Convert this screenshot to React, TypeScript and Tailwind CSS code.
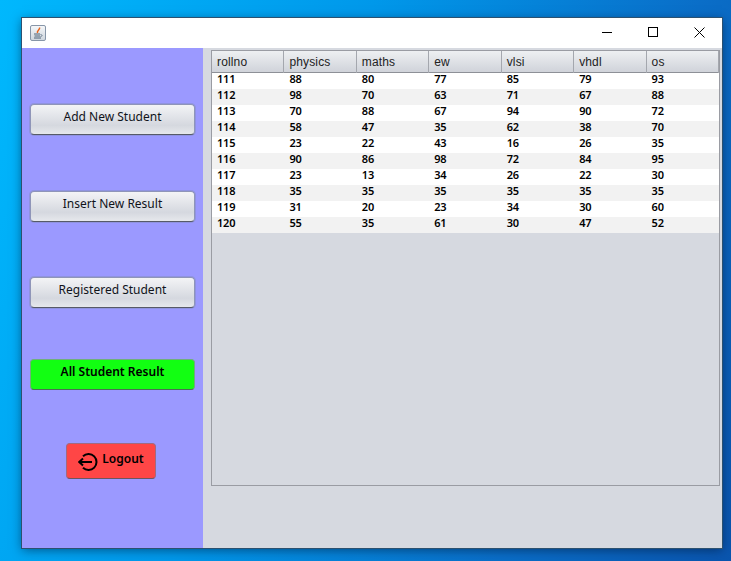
import { useState } from "react";

const COLUMNS = ["rollno", "physics", "maths", "ew", "vlsi", "vhdl", "os"];

const ROWS = [
  [111, 88, 80, 77, 85, 79, 93],
  [112, 98, 70, 63, 71, 67, 88],
  [113, 70, 88, 67, 94, 90, 72],
  [114, 58, 47, 35, 62, 38, 70],
  [115, 23, 22, 43, 16, 26, 35],
  [116, 90, 86, 98, 72, 84, 95],
  [117, 23, 13, 34, 26, 22, 30],
  [118, 35, 35, 35, 35, 35, 35],
  [119, 31, 20, 23, 34, 30, 60],
  [120, 55, 35, 61, 30, 47, 52],
];

const MENU_BUTTON =
  "flex h-[31px] w-[165px] items-center justify-center rounded-[4px] border border-[#8f95b8] border-b-[#565a68] bg-gradient-to-b from-[#f3f4f6] via-[#d5d8df] via-70% to-[#e6e8ec] pb-[5px] font-['Noto_Sans',sans-serif] text-[12px] text-[#10131a] shadow-[0_0_0_1px_#8f93e0]";

function JavaIcon() {
  return (
    <div className="flex h-4 w-4 items-center justify-center rounded-[2px] border border-[#8796a8] bg-gradient-to-b from-[#f5f7f9] to-[#cfd6de]">
      <svg width="12" height="13" viewBox="0 0 12 13" fill="none">
        <path d="M7.5 0.5C8.5 2.5 4.5 3.5 5.5 6" stroke="#e8641c" strokeWidth="1.5" />
        <path d="M2 7H8M2.5 9H8M2 11H9" stroke="#4f6478" strokeWidth="1" />
        <path d="M8.5 7.5C10.5 7.5 10.5 9.5 8.5 9.5" stroke="#4f6478" strokeWidth="0.8" />
      </svg>
    </div>
  );
}

function TitleBar() {
  return (
    <div className="flex h-[30px] items-center justify-between bg-white pl-2">
      <JavaIcon />
      <div className="flex items-center pb-0.5">
        <div className="flex h-7 w-[46px] items-center justify-center">
          <svg width="10" height="10" viewBox="0 0 10 10">
            <path d="M0 5.5H10" stroke="#000" strokeWidth="1" />
          </svg>
        </div>
        <div className="flex h-7 w-[46px] items-center justify-center">
          <svg width="10" height="10" viewBox="0 0 10 10">
            <rect x="0.5" y="0.5" width="9" height="9" fill="none" stroke="#000" strokeWidth="1" />
          </svg>
        </div>
        <div className="flex h-7 w-[46px] items-center justify-center">
          <svg width="11" height="11" viewBox="0 0 11 11">
            <path d="M0.5 0.5L10.5 10.5M10.5 0.5L0.5 10.5" stroke="#000" strokeWidth="1" />
          </svg>
        </div>
      </div>
    </div>
  );
}

function Sidebar() {
  const [active] = useState("All Student Result");

  return (
    <aside className="flex w-[181px] shrink-0 flex-col items-start bg-[#9b99ff] pl-2 pt-14">
      <button className={MENU_BUTTON}>Add New Student</button>
      <button className={`${MENU_BUTTON} mt-14`}>Insert New Result</button>
      <button className={`${MENU_BUTTON} mt-[55px]`}>Registered Student</button>
      <button className="mt-[51px] flex h-[31px] w-[165px] items-center justify-center rounded-[4px] border border-[#6fae7a] border-b-[#4d6d55] bg-[#12ff12] pb-[5px] font-['Noto_Sans',sans-serif] text-[12px] font-semibold text-black">
        {active}
      </button>
      <button className="ml-9 mt-[53px] flex h-9 w-[90px] items-center justify-center gap-[3px] rounded-[4px] border border-[#a26a80] border-b-[#6d5560] bg-[#ff4646] pb-1 font-['Noto_Sans',sans-serif] text-[12px] font-semibold text-black">
        <svg width="21" height="18" viewBox="0 0 21 18" fill="none" className="mt-1.5">
          <path d="M5 3.2A8 8 0 1 1 5 14.8" stroke="#000" strokeWidth="2" />
          <path d="M1.5 9H14" stroke="#000" strokeWidth="2" />
          <path d="M5 5.5L1.2 9L5 12.5" stroke="#000" strokeWidth="2" />
        </svg>
        Logout
      </button>
    </aside>
  );
}

function ResultTable() {
  return (
    <div className="ml-2 mt-0.5 h-[436px] w-[509px] border border-[#9a9ca3]">
      <div className="grid h-[22px] grid-cols-7 border-b border-[#8d9097] bg-gradient-to-b from-[#eef0f2] to-[#d0d3da]">
        {COLUMNS.map((name) => (
          <div
            key={name}
            className="border-r border-[#a4a7ae] pl-[5px] font-['Liberation_Sans',sans-serif] text-[12px] leading-[22px] tracking-[0.15px] text-[#222]"
          >
            {name}
          </div>
        ))}
      </div>
      {ROWS.map((row, i) => (
        <div
          key={row[0]}
          className={`grid h-4 grid-cols-7 ${i % 2 === 0 ? "bg-white" : "bg-[#f2f2f2]"}`}
        >
          {row.map((value, j) => (
            <div
              key={j}
              className="pl-[5px] font-['Noto_Sans',sans-serif] text-[11px] font-semibold leading-[12px] tracking-[-0.2px] text-black"
            >
              {value}
            </div>
          ))}
        </div>
      ))}
    </div>
  );
}

export default function App() {
  return (
    <div className="h-[561px] w-[731px] overflow-hidden bg-[linear-gradient(110deg,#00b8fd_0%,#0098ea_40%,#0a6ec8_75%,#0a55ae_100%)] pl-[22px] pt-[18px]">
      <div className="flex h-[530px] w-[700px] flex-col shadow-[0_2px_10px_rgba(0,20,50,0.55)] outline outline-1 outline-[#2c5170]">
        <TitleBar />
        <div className="flex h-[500px] bg-[#d6d9e0]">
          <Sidebar />
          <div className="flex-1">
            <ResultTable />
          </div>
        </div>
      </div>
    </div>
  );
}
